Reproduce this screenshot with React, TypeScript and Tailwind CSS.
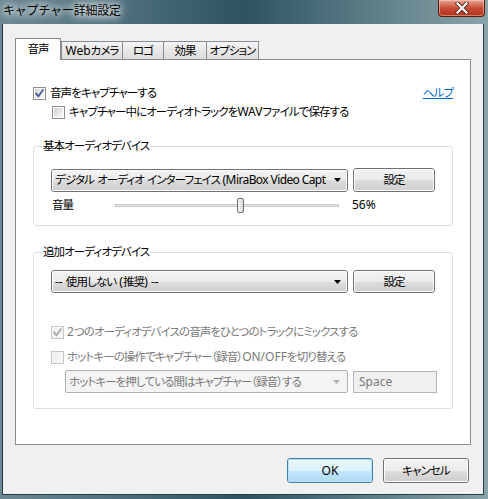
import React from "react";

const F = "font-['Noto_Sans','Noto_Sans_CJK_JP',sans-serif] [font-feature-settings:'palt']";

function L({ children, tight }: { children: React.ReactNode; tight?: boolean }) {
  return (
    <span className={"text-[12px] " + (tight ? "tracking-[-0.6px]" : "tracking-normal")}>{children}</span>
  );
}

function Check({ checked, disabled }: { checked?: boolean; disabled?: boolean }) {
  return (
    <span
      className={
        "relative inline-flex w-[13px] h-[13px] shrink-0 border " +
        (disabled ? "border-[#c6c6c6] bg-[#f6f6f6]" : "border-[#8f8f8f] bg-white")
      }
    >
      <span
        className={
          "absolute inset-[1px] " +
          (disabled
            ? "bg-linear-to-br from-[#ececec] to-[#f8f8f8]"
            : "bg-linear-to-br from-[#d6d6d6] to-[#f9f9f9]")
        }
      />
      {checked && (
        <svg className="absolute inset-0" width="11" height="11" viewBox="0 0 11 11">
          <path
            d="M2.2 5.6 L4.4 8.2 L8.8 2.2"
            fill="none"
            stroke={disabled ? "#a8a8a8" : "#4b5d95"}
            strokeWidth="1.8"
            strokeLinecap="square"
          />
        </svg>
      )}
    </span>
  );
}

function Arrow({ disabled }: { disabled?: boolean }) {
  return (
    <svg width="7" height="4" viewBox="0 0 7 4" className="shrink-0">
      <path d="M0 0 H7 L3.5 4 Z" fill={disabled ? "#b0b0b0" : "#000"} />
    </svg>
  );
}

function VButton({ label, w, h, def }: { label: React.ReactNode; w: string; h: string; def?: boolean }) {
  return (
    <div
      className={
        "relative flex items-center justify-center rounded-[3px] border " +
        w +
        " " +
        h +
        " " +
        (def ? "border-[#3c7fb1]" : "border-[#707070]")
      }
    >
      <div
        className={
          "absolute inset-0 rounded-[2px] border flex flex-col overflow-hidden " +
          (def ? "border-[#b8e0f6]" : "border-[#fcfcfc]")
        }
      >
        <div
          className={
            "flex-1 bg-linear-to-b " +
            (def ? "from-[#ecf7fd] to-[#dcf1fc]" : "from-[#f2f2f2] to-[#ebebeb]")
          }
        />
        <div
          className={
            "flex-1 bg-linear-to-b " +
            (def ? "from-[#c3e7fc] to-[#aedcf4]" : "from-[#dddddd] to-[#cfcfcf]")
          }
        />
      </div>
      <span className="relative leading-[16px] text-black whitespace-nowrap">{label}</span>
    </div>
  );
}

function Combo({ label, w, disabled }: { label: React.ReactNode; w: string; disabled?: boolean }) {
  if (disabled) {
    return (
      <div
        className={
          "flex items-center h-[23px] rounded-[2px] border border-[#adb2b5] bg-[#f4f4f4] pl-[3px] pr-[7px] " +
          w
        }
      >
        <span className="flex-1 leading-[16px] text-[#7a7a7a] whitespace-nowrap overflow-hidden">{label}</span>
        <Arrow disabled />
      </div>
    );
  }
  return (
    <div className={"relative flex items-center h-[23px] rounded-[3px] border border-[#707070] " + w}>
      <div className="absolute inset-0 rounded-[2px] border border-[#fcfcfc] flex flex-col overflow-hidden">
        <div className="flex-1 bg-linear-to-b from-[#f2f2f2] to-[#ebebeb]" />
        <div className="flex-1 bg-linear-to-b from-[#dddddd] to-[#cfcfcf]" />
      </div>
      <div className="relative flex items-center w-full pl-[3px] pr-[6px]">
        <span className="flex-1 leading-[16px] text-black whitespace-nowrap overflow-hidden">{label}</span>
        <Arrow />
      </div>
    </div>
  );
}

function Group({ title, h, children }: { title: string; h: string; children: React.ReactNode }) {
  return (
    <div className={"relative rounded-[3px] border border-[#d5dfe5] " + h}>
      <span className="absolute left-[8px] -top-[9px] bg-white px-[1px] leading-[16px] text-black whitespace-nowrap">
        {title}
      </span>
      {children}
    </div>
  );
}

const TAB =
  "h-[18px] border border-b-0 border-[#898c95] bg-linear-to-b from-[#f4f4f4] to-[#dcdcdc] flex items-center justify-center leading-[16px] text-black whitespace-nowrap";

export default function App() {
  return (
    <div
      className={
        "relative w-[488px] h-[499px] overflow-hidden flex flex-col bg-linear-to-r from-[#6d8993] via-[#2e5461] to-[#8aa4a9] " +
        F
      }
    >
      {/* Title bar */}
      <div className="h-[24px] shrink-0 flex items-start justify-between">
        <span className="ml-[3px] mt-[3px] text-[12px] leading-[16px] text-black tracking-[-0.2px] [font-feature-settings:normal] [text-shadow:0_0_6px_#fff,0_0_10px_#fff,0_0_14px_rgba(255,255,255,0.9)]">
          キャプチャー詳細設定
        </span>
        <div className="mr-[3px] w-[47px] h-[17px] rounded-b-[4px] border border-t-0 border-[#5a1b12] bg-linear-to-b from-[#e4a594] via-[#c94c37] to-[#b33219] flex items-center justify-center shadow-[inset_0_0_0_1px_rgba(255,220,210,0.45)]">
          <svg width="14" height="12" viewBox="0 0 14 12">
            <path
              d="M2.5 1.5 L11.5 10.5 M11.5 1.5 L2.5 10.5"
              stroke="#5b2a22"
              strokeWidth="4"
              strokeLinecap="square"
            />
            <path
              d="M2.5 1.5 L11.5 10.5 M11.5 1.5 L2.5 10.5"
              stroke="#ffffff"
              strokeWidth="2.2"
              strokeLinecap="square"
            />
          </svg>
        </div>
      </div>

      {/* Client area */}
      <div className="ml-[2px] mr-[4px] mb-[4px] flex-1 flex flex-col border-l border-r border-b border-[#263e47] bg-[#f0f0f0] text-[11.5px] tracking-[-0.9px]">
        <div className="ml-[12px] mt-[14px] w-[456px]">
          {/* Tabs */}
          <div className="relative z-10 flex items-end h-[21px]">
            <div className="w-[46px] h-[22px] -mb-px border border-b-0 border-[#898c95] bg-white flex items-center justify-center leading-[16px] text-black pb-[2px]">
              音声
            </div>
            <div className={"w-[62px] " + TAB}>
              <L>Web</L>カメラ
            </div>
            <div className={"-ml-px w-[42px] " + TAB}>ロゴ</div>
            <div className={"-ml-px w-[44px] " + TAB}>効果</div>
            <div className={"-ml-px w-[53px] " + TAB}>オプション</div>
          </div>

          {/* Panel */}
          <div className="h-[386px] border border-[#898c95] bg-white pt-[25px] px-[17px] leading-[16px] text-black">
            <div className="flex items-center h-[16px]">
              <Check checked />
              <span className="ml-[4px]">音声をキャプチャーする</span>
              <span className="ml-auto text-[#0066cc] underline">ヘルプ</span>
            </div>
            <div className="mt-[3px] pl-[19px] flex items-center h-[16px]">
              <Check />
              <span className="ml-[4px] whitespace-nowrap">
                キャプチャー中にオーディオトラックを<L>WAV</L>ファイルで保存する
              </span>
            </div>

            <div className="mt-[26px]">
              <Group title="基本オーディオデバイス" h="h-[80px]">
                <div className="pt-[21px] pl-[17px]">
                  <div className="flex items-center gap-[5px]">
                    <Combo
                      w="w-[297px]"
                      label={
                        <>
                          デジタル<L> </L>オーディオ<L> </L>インターフェイス
                          <L tight> (MiraBox Video Capt</L>
                        </>
                      }
                    />
                    <VButton label="設定" w="w-[82px]" h="h-[24px]" />
                  </div>
                  <div className="mt-[4px] flex items-center h-[18px]">
                    <span className="w-[64px] pl-[1px]">音量</span>
                    <div className="relative w-[224px] h-[18px]">
                      <div className="absolute left-0 right-0 top-[8px] h-[3px] border border-[#c4c8ca] bg-[#e7eaea]" />
                      <div className="absolute left-[122px] top-[2px] w-[7px] h-[15px] rounded-[2px] border border-[#6f6f6f] bg-linear-to-r from-[#f4f4f4] to-[#d8d8d8]" />
                    </div>
                    <span className="ml-[13px]">
                      <L>56%</L>
                    </span>
                  </div>
                </div>
              </Group>
            </div>

            <div className="mt-[26px]">
              <Group title="追加オーディオデバイス" h="h-[157px]">
                <div className="pt-[17px] pl-[17px]">
                  <div className="flex items-center gap-[5px]">
                    <Combo
                      w="w-[297px]"
                      label={
                        <>
                          <L>-- </L>使用しない<L> (</L>推奨<L>) --</L>
                        </>
                      }
                    />
                    <VButton label="設定" w="w-[82px]" h="h-[23px]" />
                  </div>
                  <div className="mt-[31px] flex items-center h-[16px]">
                    <Check checked disabled />
                    <span className="ml-[3px] text-[#7a7a7a] whitespace-nowrap">
                      <L>2</L>つのオーディオデバイスの音声をひとつのトラックにミックスする
                    </span>
                  </div>
                  <div className="mt-[9px] flex items-center h-[16px]">
                    <Check disabled />
                    <span className="ml-[3px] text-[#7a7a7a] whitespace-nowrap">
                      ホットキーの操作でキャプチャー（録音）<L>ON/OFF</L>を切り替える
                    </span>
                  </div>
                  <div className="mt-[5px] pl-[14px] flex items-center gap-[5px]">
                    <Combo disabled w="w-[283px]" label="ホットキーを押している間はキャプチャー（録音）する" />
                    <div className="w-[84px] h-[22px] border border-[#b5b5b5] bg-[#f0f0f0] flex items-center pl-[5px] text-[#7a7a7a]">
                      <L>Space</L>
                    </div>
                  </div>
                </div>
              </Group>
            </div>
          </div>
        </div>

        {/* Bottom buttons */}
        <div className="mt-[13px] pr-[14px] flex justify-end gap-[10px]">
          <VButton def label={<L>OK</L>} w="w-[86px]" h="h-[25px]" />
          <VButton label="キャンセル" w="w-[86px]" h="h-[25px]" />
        </div>
      </div>
    </div>
  );
}
